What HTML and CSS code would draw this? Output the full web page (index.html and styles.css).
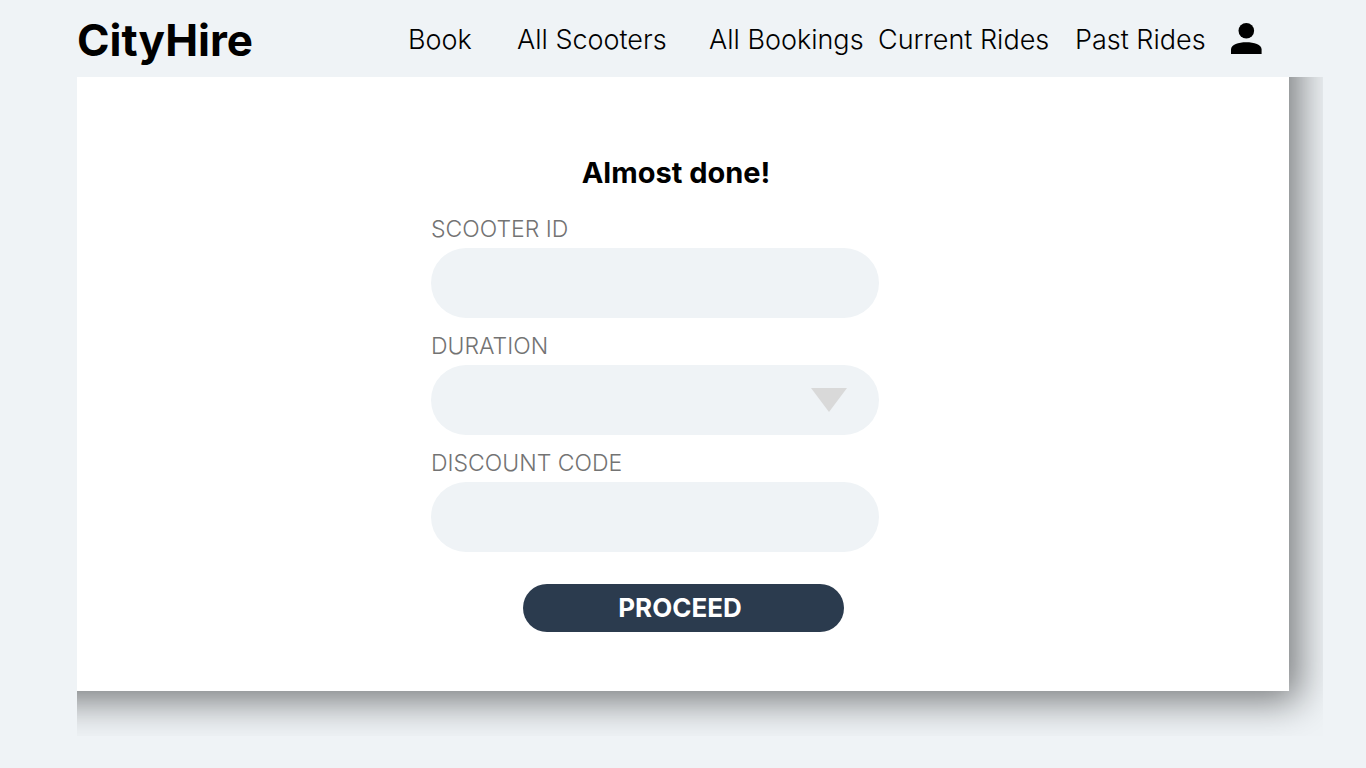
FILE: index.html
```html
<!DOCTYPE html>
<html lang="en">
<head>
  <meta charset="utf-8">
  <meta name="viewport" content="width=device-width, initial-scale=1">
  <title>CityHire</title>
  <link rel="stylesheet" href="styles.css">
</head>
<body>
  <header class="topbar">
    <a class="brand" href="#">CityHire</a>
    <nav class="nav" aria-label="Main">
      <a class="nav-link" href="#">Book</a>
      <a class="nav-link" href="#">All Scooters</a>
      <a class="nav-link" href="#">All Bookings</a>
      <a class="nav-link" href="#">Current Rides</a>
      <a class="nav-link" href="#">Past Rides</a>
    </nav>
    <a class="account" href="#" aria-label="Account">
      <svg class="account-icon" viewBox="0 0 31 31" aria-hidden="true">
        <circle cx="15.3" cy="7.8" r="7.8"/>
        <path d="M0 31V26.5C0 21.5 7.5 19.2 15.3 19.2S30.6 21.5 30.6 26.5V31Z"/>
      </svg>
    </a>
  </header>
  <main class="stage">
    <section class="card">
      <form class="booking">
        <h1 class="title">Almost done!</h1>
        <div class="field">
          <label class="label" for="scooter">SCOOTER ID</label>
          <input class="control" id="scooter" type="text">
        </div>
        <div class="field">
          <label class="label" for="duration">DURATION</label>
          <div class="select-wrap">
            <select class="control" id="duration"><option value=""></option></select>
            <svg class="arrow" viewBox="0 0 36 24" aria-hidden="true"><path d="M0 0H36L18 24Z"/></svg>
          </div>
        </div>
        <div class="field">
          <label class="label" for="discount">DISCOUNT CODE</label>
          <input class="control" id="discount" type="text">
        </div>
        <button class="proceed" type="button">PROCEED</button>
      </form>
    </section>
  </main>
</body>
</html>
```
FILE: styles.css
```css
* {
  box-sizing: border-box;
}

body {
  margin: 0;
  background: #eff3f6;
  color: #000;
  font-family: Inter, "Open Sans", sans-serif;
}

.topbar {
  display: flex;
  align-items: center;
  padding: 10px 104px 7px 77px;
}

.brand {
  flex: 0 0 331px;
  color: inherit;
  font-size: 44px;
  font-weight: 700;
  line-height: 60px;
  text-decoration: none;
}

.nav {
  flex: 1;
  display: grid;
  grid-template-columns: 109fr 192fr 169fr 197fr 156fr;
}

.nav-link {
  color: inherit;
  font-size: 27px;
  font-weight: 300;
  line-height: 32px;
  text-decoration: none;
  white-space: nowrap;
}

.account {
  display: flex;
  padding-bottom: 4px;
}

.account-icon {
  width: 31px;
  height: 31px;
}

/* The card's shadow is cut off at the edges of this box. */
.stage {
  margin: 0 43px 0 77px;
  padding: 0 34px 45px 0;
  overflow: hidden;
}

.card {
  padding: 80px 24px 59px;
  background: #fff;
  box-shadow: -30px -30px 36px 40px rgba(0, 0, 0, 0.5);
}

.booking {
  display: flex;
  flex-direction: column;
  gap: 14px;
  max-width: 504px;
  margin: 0 auto;
}

.title {
  margin: 0 0 12px;
  padding-right: 14px;
  font-size: 29px;
  font-weight: 700;
  line-height: 32px;
  text-align: center;
}

.field {
  display: flex;
  flex-direction: column;
  gap: 5px;
  margin-right: 56px;
}

.label {
  color: #737373;
  font-size: 23px;
  font-weight: 300;
  line-height: 28px;
}

.select-wrap {
  position: relative;
}

.control {
  display: block;
  width: 100%;
  height: 70px;
  padding: 0 32px;
  border: 0;
  border-radius: 35px;
  background: #eff3f6;
  color: inherit;
  font: inherit;
  font-size: 23px;
  appearance: none;
}

.arrow {
  position: absolute;
  top: 23px;
  right: 32px;
  width: 36px;
  height: 24px;
  fill: #d9d9d9;
  pointer-events: none;
}

.proceed {
  align-self: center;
  width: 321px;
  max-width: 100%;
  margin-top: 18px;
  padding: 8px 6px 8px 0;
  border: 0;
  border-radius: 24px;
  background: #2b3b4e;
  color: #fff;
  font: inherit;
  font-size: 26px;
  font-weight: 700;
  line-height: 32px;
}
```
